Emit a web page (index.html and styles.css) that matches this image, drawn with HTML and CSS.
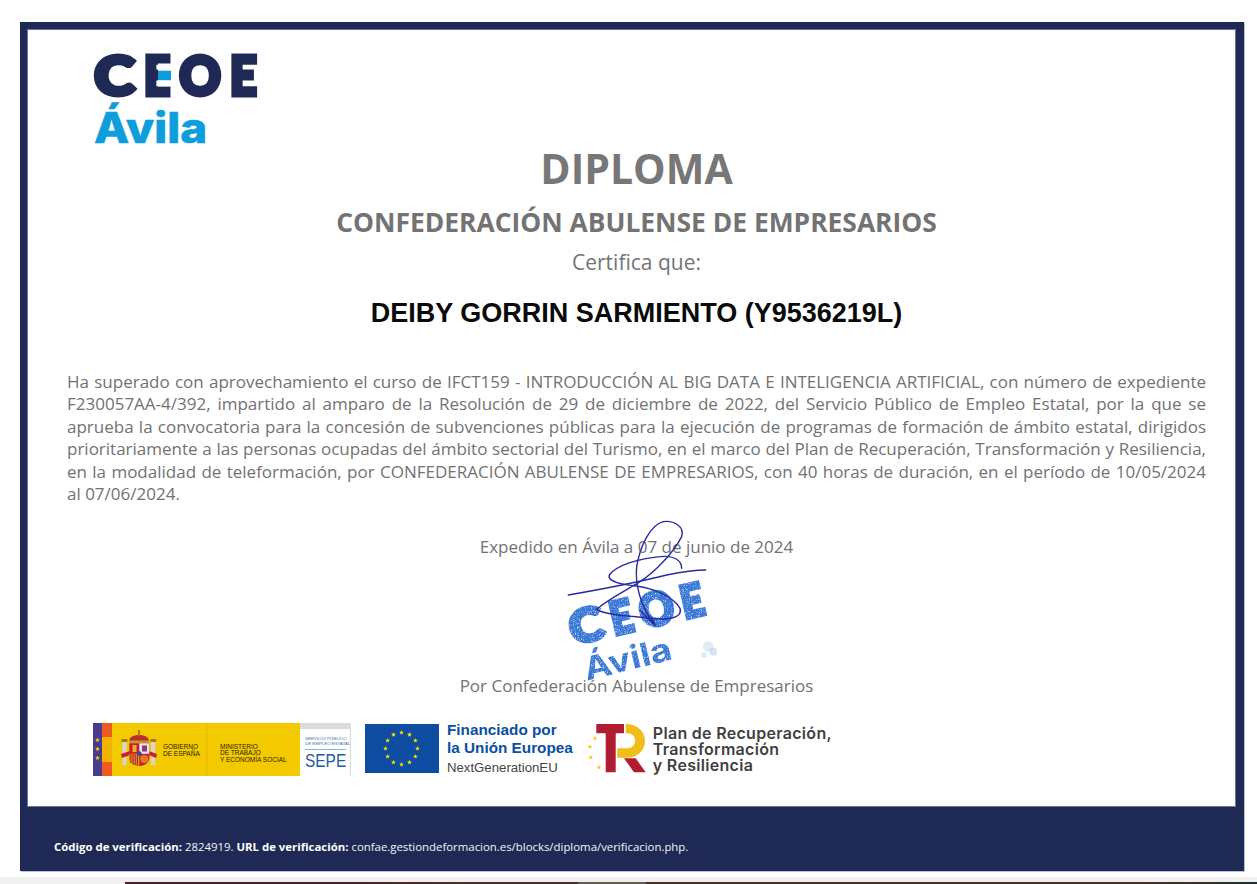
FILE: index.html
```html
<!DOCTYPE html>
<html lang="es">
<head>
<meta charset="utf-8">
<title>Diploma</title>
<link rel="stylesheet" href="styles.css">
</head>
<body>
<svg class="defs" width="0" height="0" aria-hidden="true">
  <defs>
    <polygon id="star" points="0,-2.6 .6,-.8 2.5,-.8 1,.3 1.5,2.1 0,1 -1.5,2.1 -1,.3 -2.5,-.8 -.6,-.8"/>
    <filter id="grain" x="0" y="0" width="100%" height="100%">
      <feTurbulence type="fractalNoise" baseFrequency="0.5" numOctaves="2" seed="4" result="n"/>
      <feColorMatrix in="n" type="matrix" values="0 0 0 0 0  0 0 0 0 0  0 0 0 0 0  0 0 0 -2.4 2.2" result="m"/>
      <feComposite in="SourceGraphic" in2="m" operator="in"/>
    </filter>
  </defs>
</svg>
<div class="page">
  <main class="diploma">
    <section class="sheet">
      <div class="brand">
        <svg class="logo" viewBox="0 0 168 92" width="168" height="92" role="img" aria-label="CEOE Ávila">
          <g class="logo-ceoe">
            <text transform="translate(1.500 41.500) scale(1.120 1)">C</text>
            <text transform="translate(51 41.500) scale(.840 1)">E</text>
            <text transform="translate(86.500 41.500) scale(.940 1)">O</text>
            <text transform="translate(137 41.500) scale(.860 1)">E</text>
          </g>
          <rect x="65" y="10.500" width="16" height="23" fill="#fff"/>
          <rect x="65" y="17.700" width="13" height="9.500" fill="#0d9ddb"/>
          <text class="logo-avila" transform="translate(1 90) scale(1.090 1)">Ávila</text>
        </svg>
      </div>
      <div class="content">
        <h1 class="title">DIPLOMA</h1>
        <h2 class="subtitle">CONFEDERACIÓN ABULENSE DE EMPRESARIOS</h2>
        <p class="certifies">Certifica que:</p>
        <p class="name">DEIBY GORRIN SARMIENTO (Y9536219L)</p>
        <p class="body-text">Ha superado con aprovechamiento el curso de IFCT159 - INTRODUCCIÓN AL BIG DATA E INTELIGENCIA ARTIFICIAL, con número de expediente F230057AA-4/392, impartido al amparo de la Resolución de 29 de diciembre de 2022, del Servicio Público de Empleo Estatal, por la que se aprueba la convocatoria para la concesión de subvenciones públicas para la ejecución de programas de formación de ámbito estatal, dirigidos prioritariamente a las personas ocupadas del ámbito sectorial del Turismo, en el marco del Plan de Recuperación, Transformación y Resiliencia, en la modalidad de teleformación, por CONFEDERACIÓN ABULENSE DE EMPRESARIOS, con 40 horas de duración, en el período de 10/05/2024 al 07/06/2024.</p>
        <p class="issued">Expedido en Ávila a 07 de junio de 2024</p>
        <p class="signer">Por Confederación Abulense de Empresarios</p>
      </div>
      <div class="sponsors">
        <svg class="spain" viewBox="0 0 258 53" width="258" height="53" role="img" aria-label="Gobierno de España, SEPE">
          <rect width="258" height="53" fill="#f3c900"/>
          <rect width="9" height="53" fill="#4b3b8f"/>
          <rect x="9" width="10" height="53" fill="#f0b400"/>
          <rect x="9" width="10" height="14" fill="#ef5b1e"/>
          <rect x="9" y="39" width="10" height="14" fill="#ef5b1e"/>
          <g fill="#ffd800">
            <use href="#star" x="4.500" y="17"/>
            <use href="#star" x="4.500" y="26"/>
            <use href="#star" x="4.500" y="35"/>
          </g>
          <g transform="translate(28 7)">
            <rect x="1.300" y="11" width="4.400" height="24" fill="#d9d4c4"/>
            <rect x="30" y="11" width="4.400" height="24" fill="#d9d4c4"/>
            <rect x="0.500" y="9" width="6" height="3" fill="#a77a1a"/>
            <rect x="29.200" y="9" width="6" height="3" fill="#a77a1a"/>
            <path d="M0 24 L9 21 V25 L1 28Z M36 24 L28 21 V25 L35 28Z" fill="#c8202f"/>
            <path d="M8 12 C8 7 12 5 18 5 C24 5 28 7 28 12Z" fill="#b3322a"/>
            <rect x="8" y="10.500" width="20" height="2.500" fill="#c8952a"/>
            <rect x="17" y="0" width="2" height="6" fill="#a77a1a"/>
            <path d="M8.300 13.300 H28.300 V28 C28.300 33 23 36 18.300 36 C13.500 36 8.300 33 8.300 28Z" fill="#c8202f"/>
            <rect x="18.300" y="13.300" width="10" height="10.500" fill="#e9e4ea"/>
            <rect x="21" y="15.500" width="5" height="6" fill="#8a3a7a"/>
            <rect x="11.500" y="15" width="4" height="7" fill="#e3b22c"/>
            <path d="M8.300 23.800 H18.300 V35.900 C13.500 36 8.300 33 8.300 28Z" fill="#d99a1f"/>
            <path d="M9.800 24 v9 M12 24 v10.500 M14.200 24 v11 M16.400 24 v11.500" stroke="#b3222a" stroke-width="1.100"/>
            <circle cx="23.300" cy="29" r="4" fill="#e3782a"/>
            <circle cx="18.300" cy="23.500" r="2.300" fill="#2f4f9f"/>
          </g>
          <text class="gov" x="70" y="26">GOBIERNO</text>
          <text class="gov" x="70" y="33">DE ESPAÑA</text>
          <rect x="113.500" width="1" height="53" fill="#e2b800"/>
          <text class="gov" x="127" y="25.500">MINISTERIO</text>
          <text class="gov" x="127" y="32">DE TRABAJO</text>
          <text class="gov" x="127" y="38.500">Y ECONOMÍA SOCIAL</text>
          <rect x="207" width="51" height="53" fill="#fff"/>
          <rect x="207" width="51" height="6" fill="#dcdcdc"/>
          <rect x="256.800" width="1.200" height="53" fill="#dcdcdc"/>
          <text class="sepe-small" x="212" y="16.500">SERVICIO PÚBLICO</text>
          <text class="sepe-small" x="212" y="22">DE EMPLEO ESTATAL</text>
          <rect x="212" y="26" width="41" height="1" fill="#8fb0d6"/>
          <text class="sepe" transform="translate(212 44) scale(.860 1)">SEPE</text>
        </svg>
        <div class="eu">
          <svg class="eu-flag" viewBox="0 0 74 49" width="74" height="49" role="img" aria-label="Bandera de la Unión Europea">
            <rect width="74" height="49" fill="#0f4da2"/>
            <g fill="#ffe600" transform="translate(36.500 24.500)">
              <use href="#star" x="0" y="-16"/>
              <use href="#star" x="8" y="-13.860"/>
              <use href="#star" x="13.860" y="-8"/>
              <use href="#star" x="16" y="0"/>
              <use href="#star" x="13.860" y="8"/>
              <use href="#star" x="8" y="13.860"/>
              <use href="#star" x="0" y="16"/>
              <use href="#star" x="-8" y="13.860"/>
              <use href="#star" x="-13.860" y="8"/>
              <use href="#star" x="-16" y="0"/>
              <use href="#star" x="-13.860" y="-8"/>
              <use href="#star" x="-8" y="-13.860"/>
            </g>
          </svg>
          <div class="eu-text">
            <span class="eu-strong">Financiado por</span>
            <span class="eu-strong">la Unión Europea</span>
            <span class="eu-next">NextGenerationEU</span>
          </div>
        </div>
        <div class="recovery">
          <svg class="tr" viewBox="0 0 60 50" width="60" height="50" role="img" aria-label="Logotipo TR">
            <path d="M9.300 1 H37 V10.300 H28.700 V49.300 H18.700 V10.300 H9.300Z" fill="#b01c32"/>
            <path d="M38.700 1 C50 1 58 8 58 18 C58 28 50 34.700 40 34.700 H30.300 V25.300 H40 C45 25.300 48 22 48 18 C48 13 45 10.300 40 10.300 H38.700Z" fill="#f0bd1b"/>
            <path d="M37 35.300 H48.700 L58.700 49.300 H47Z" fill="#b01c32"/>
            <g fill="#f5c518">
              <use href="#star" x="8" y="15.300"/>
              <use href="#star" x="2.900" y="23.700"/>
              <use href="#star" x="3.700" y="34.300"/>
              <use href="#star" x="12" y="44.300"/>
            </g>
          </svg>
          <div class="recovery-text">
            <span>Plan de Recuperación,</span>
            <span>Transformación</span>
            <span>y Resiliencia</span>
          </div>
        </div>
      </div>
      <svg class="stamp" viewBox="0 0 600 540" width="200" height="180" role="img" aria-label="Sello y firma">
        <g class="stamp-ink" filter="url(#grain)">
          <g class="stamp-ceoe" transform="translate(100 404) rotate(-13)">
            <text transform="translate(0 0) scale(1.120 1)">C</text>
            <text transform="translate(126 0) scale(.840 1)">E</text>
            <text transform="translate(215 0) scale(.940 1)">O</text>
            <text transform="translate(343 0) scale(.860 1)">E</text>
          </g>
          <text class="stamp-avila" transform="translate(140 512) rotate(-14) scale(1.170 1)">Ávila</text>
        </g>
        <g fill="#a9c6e4">
          <circle cx="505" cy="410" r="16" opacity=".35"/>
          <circle cx="520" cy="425" r="12" opacity=".45"/>
          <circle cx="492" cy="435" r="9" opacity=".35"/>
        </g>
        <g class="signature">
          <path d="M85 255 C200 235 300 215 380 195 C430 185 470 180 497 180"/>
          <path d="M425 175 C425 150 400 135 360 140 C300 145 230 165 208 195 C200 215 250 225 290 228 C340 235 400 260 420 295 C430 325 380 330 340 325 C280 320 190 315 170 298 C200 270 260 240 300 215 C340 190 400 130 425 80 C435 50 400 30 370 35 C330 45 300 110 290 170 C285 220 300 290 345 345"/>
          <path d="M300 300 C320 322 335 338 345 345 C342 335 340 330 336 325"/>
        </g>
      </svg>
    </section>
    <footer class="verify">
      <p><strong>Código de verificación:</strong> 2824919. <strong>URL de verificación:</strong> confae.gestiondeformacion.es/blocks/diploma/verificacion.php.</p>
    </footer>
  </main>
</div>
<div class="strip"><div class="strip-dark"></div></div>
</body>
</html>
```
FILE: styles.css
```css
* { box-sizing: border-box; }
html, body { margin: 0; height: 884px; overflow: hidden; background: #fff; }
body { font-family: "Open Sans", "Noto Sans", sans-serif; color: #6b6b6b; display: flex; flex-direction: column; }
.defs { position: absolute; }
svg { overflow: visible; }

.page { padding: 22px 13px 0 20px; }
.diploma { height: 849px; background: #1e2a55; padding: 8px 9px 0 8px; display: flex; flex-direction: column; box-shadow: 1px 1px 0 #b9c3d8; }
.sheet { position: relative; height: 776px; background: #fff; flex: none; box-shadow: 0 0 0 1px #6b7596; }

.brand { height: 113px; padding: 23px 0 0 65px; }
.logo { display: block; }
.logo-ceoe text { font: 900 54px Lato, sans-serif; fill: #1e2a55; stroke: #1e2a55; stroke-width: 5px; }
.logo-avila { font: 800 42px Inter, sans-serif; fill: #0d9ddb; stroke: #0d9ddb; stroke-width: .6px; }

.content { padding: 0 29px 0 39px; }
.content p, .content h1, .content h2 { margin: 0; }
.title { font-size: 41px; line-height: 50px; font-weight: 700; text-align: center; color: #777; }
.subtitle { margin-top: 12px !important; font-size: 26.400px; line-height: 34px; font-weight: 700; text-align: center; color: #737373; }
.certifies { margin-top: 9px !important; font-size: 21px; line-height: 28px; text-align: center; color: #747474; }
.name { margin-top: 22px !important; font: 700 27px/30px "Liberation Sans", Arial, sans-serif; text-align: center; color: #0a0a0a; }
.body-text { margin-top: 43px !important; font-size: 17px; line-height: 22.400px; text-align: justify; color: #727272; }
.issued { margin-top: 30px !important; font-size: 17px; line-height: 24px; text-align: center; color: #727272; }
.signer { margin-top: 115px !important; font-size: 17px; line-height: 24px; text-align: center; color: #727272; }

.sponsors { display: flex; align-items: flex-start; gap: 14px; padding: 25px 0 0 65px; }
.spain { display: block; flex: none; }
.gov { font: 400 6.500px "Liberation Sans", Arial, sans-serif; fill: #2a2510; }
.sepe-small { font: 400 4.400px "Liberation Sans", Arial, sans-serif; fill: #3f6fae; }
.sepe { font: 400 18px "Liberation Sans", Arial, sans-serif; fill: #1f5aa6; }

.eu { display: flex; gap: 8px; align-items: flex-start; }
.eu-flag { display: block; flex: none; margin-top: 1px; }
.eu-text { display: flex; flex-direction: column; margin-top: -2px; font-family: "Liberation Sans", Arial, sans-serif; }
.eu-strong { font-size: 15.300px; line-height: 18px; font-weight: 700; color: #0b4ea2; white-space: nowrap; }
.eu-next { font-size: 13.200px; line-height: 22px; color: #444; white-space: nowrap; }

.recovery { display: flex; align-items: flex-start; gap: 6px; }
.tr { display: block; flex: none; }
.recovery-text { display: flex; flex-direction: column; margin-top: 2px; font: 600 16px/16px Inter, sans-serif; color: #3f3f3f; letter-spacing: .3px; white-space: nowrap; }

.stamp { position: absolute; left: 512px; top: 480px; }
.stamp-ink { fill: #3a78d6; }
.stamp-ceoe text { font: 900 136px Lato, sans-serif; stroke: #3a78d6; stroke-width: 12px; }
.stamp-avila { font: 700 96px Inter, sans-serif; }
.signature path { fill: none; stroke: #2a2aa0; stroke-width: 4.200px; stroke-linecap: round; }

.verify { flex: 1; display: flex; align-items: center; padding: 16px 0 0 26px; }
.verify p { margin: 0; font-size: 11.400px; color: #f2f4f8; }
.verify strong { font-weight: 700; color: #fff; }

.strip { margin-top: 6px; height: 7px; background: #f0f0f0; display: flex; align-items: flex-end; padding-left: 125px; }
.strip-dark { flex: 1; height: 2px; background: linear-gradient(90deg, #4c1f2c 0 20%, #4a3026 30% 40%, #6b5a54 40% 46%, #4a3020 46% 90%, #1f3030 100%); }
```
